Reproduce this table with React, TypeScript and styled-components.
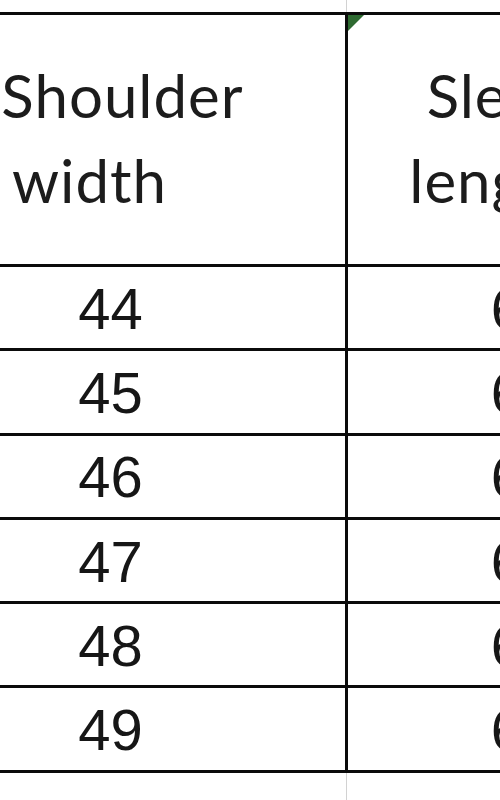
import React from 'react';
import styled, { createGlobalStyle } from 'styled-components';

const GlobalStyle = createGlobalStyle`
  html, body {
    margin: 0;
    padding: 0;
    background: #ffffff;
    overflow: hidden;
  }
  body {
    width: 500px;
    height: 800px;
  }
`;

const Sheet = styled.div`
  margin-left: -124px;
  width: 821px;
`;

const Gutter = styled.div<{ $height: number }>`
  display: flex;
  height: ${(p) => p.$height}px;
`;

const GutterCell = styled.div`
  width: 471px;
  box-sizing: border-box;
  border-right: 1px solid #d2d2d2;
`;

const Table = styled.div`
  display: grid;
  grid-template-columns: 472px 350px;
  border-top: 3px solid #0b0b0b;
`;

const Cell = styled.div<{ $first?: boolean; $header?: boolean }>`
  position: relative;
  box-sizing: border-box;
  height: ${(p) => (p.$header ? '252px' : '84.3px')};
  padding-bottom: ${(p) => (p.$header ? '4px' : '0')};
  border-bottom: 3px solid #0b0b0b;
  border-right: ${(p) => (p.$first ? '3px solid #0b0b0b' : 'none')};
  display: flex;
  flex-direction: column;
  align-items: center;
  justify-content: center;
  color: #161616;
`;

const HeaderLine = styled.span<{ $shift: number }>`
  display: block;
  font-family: Lato, 'Open Sans', sans-serif;
  font-size: 60px;
  letter-spacing: 1px;
  line-height: 85px;
  white-space: nowrap;
  color: #1c1c1c;
  padding-left: ${(p) => (p.$shift > 0 ? p.$shift * 2 : 0)}px;
  padding-right: ${(p) => (p.$shift < 0 ? -p.$shift * 2 : 0)}px;
`;

const Value = styled.span`
  font-family: 'Liberation Sans', Arial, sans-serif;
  font-size: 58px;
  line-height: 1;
  padding-top: 2px;
`;

const ErrorMark = styled.div`
  position: absolute;
  top: 0;
  left: 0;
  width: 0;
  height: 0;
  border-top: 16px solid #2e6a31;
  border-right: 16px solid transparent;
`;

const rows = [
  { shoulder: 44, sleeve: 60 },
  { shoulder: 45, sleeve: 61 },
  { shoulder: 46, sleeve: 62 },
  { shoulder: 47, sleeve: 63 },
  { shoulder: 48, sleeve: 64 },
  { shoulder: 49, sleeve: 65 },
];

const App: React.FC = () => {
  return (
    <>
      <GlobalStyle />
      <Sheet>
        <Gutter $height={12}>
          <GutterCell />
        </Gutter>
        <Table>
          <Cell $first $header>
            <HeaderLine $shift={12}>Shoulder</HeaderLine>
            <HeaderLine $shift={-21}>width</HeaderLine>
          </Cell>
          <Cell $header>
            <ErrorMark />
            <HeaderLine $shift={-8}>Sleeve</HeaderLine>
            <HeaderLine $shift={-28}>length</HeaderLine>
          </Cell>
          {rows.map((r) => (
            <React.Fragment key={r.shoulder}>
              <Cell $first>
                <Value>{r.shoulder}</Value>
              </Cell>
              <Cell>
                <Value>{r.sleeve}</Value>
              </Cell>
            </React.Fragment>
          ))}
        </Table>
        <Gutter $height={40}>
          <GutterCell />
        </Gutter>
      </Sheet>
    </>
  );
};

export default App;
